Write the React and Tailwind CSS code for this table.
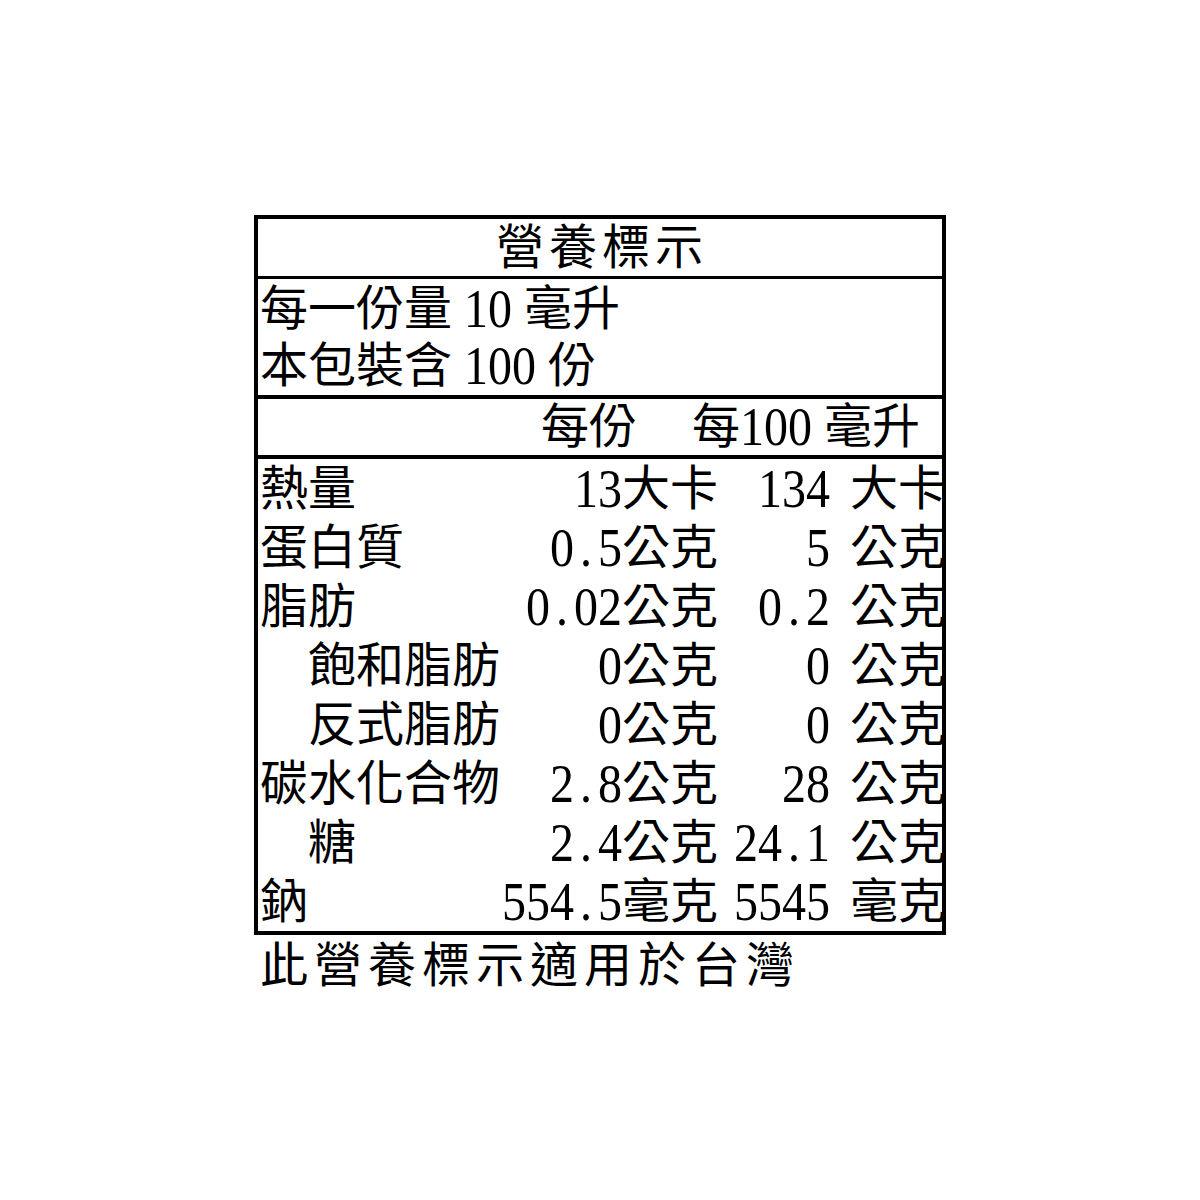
import React from 'react'

const font = { fontFamily: "'Liberation Serif', 'Noto Sans CJK TC', serif" }

const rows = [
  { name: '熱量', a: '13', au: '大卡', b: '134', bu: '大卡' },
  { name: '蛋白質', a: '0.5', au: '公克', b: '5', bu: '公克' },
  { name: '脂肪', a: '0.02', au: '公克', b: '0.2', bu: '公克' },
  { name: '飽和脂肪', indent: true, a: '0', au: '公克', b: '0', bu: '公克' },
  { name: '反式脂肪', indent: true, a: '0', au: '公克', b: '0', bu: '公克' },
  { name: '碳水化合物', a: '2.8', au: '公克', b: '28', bu: '公克' },
  { name: '糖', indent: true, a: '2.4', au: '公克', b: '24.1', bu: '公克' },
  { name: '鈉', a: '554.5', au: '毫克', b: '5545', bu: '毫克' },
]

// half-width digits, tall like the Ming face in the label
const Num = ({ children }) => {
  const parts = String(children).split('.')
  return (
    <span className="inline-block origin-center scale-y-115 leading-none">
      {parts[0]}
      {parts.length > 1 && (
        <>
          <span className="inline-block w-[24px] text-center">.</span>
          {parts[1]}
        </>
      )}
    </span>
  )
}

const App = () => {
  return (
    <div className="min-h-[1200px] w-[1200px] bg-white text-black" style={font}>
      <div className="pl-[254px] pt-[215px]">
        <div className="w-[692px] border-4 border-black text-[48px]">
          {/* title */}
          <div className="flex h-[60px] items-center justify-center border-b-[3px] border-black pl-[4px] leading-none tracking-[5px]">
            營養標示
          </div>

          {/* servings */}
          <div className="flex h-[120px] flex-col justify-center border-b-4 border-black pl-[2px] leading-[57px]">
            <div>每一份量 <Num>10</Num> 毫升</div>
            <div>本包裝含 <Num>100</Num> 份</div>
          </div>

          {/* header */}
          <div className="flex h-[60px] items-center justify-end gap-[55px] border-b-4 border-black pr-[22px] leading-none">
            <span>每份</span>
            <span>每<Num>100</Num> 毫升</span>
          </div>

          {/* data rows */}
          <div className="flex flex-col">
            {rows.map((r) => (
              <div
                key={r.name}
                className="grid h-[59px] grid-cols-[242px_122px_96px_112px_20px_92px] items-center leading-none"
              >
                <span className={r.indent ? 'pl-[50px]' : 'pl-[2px]'}>{r.name}</span>
                <span className="whitespace-nowrap text-right"><Num>{r.a}</Num></span>
                <span className="whitespace-nowrap">{r.au}</span>
                <span className="whitespace-nowrap text-right"><Num>{r.b}</Num></span>
                <span />
                <span className="whitespace-nowrap">{r.bu}</span>
              </div>
            ))}
          </div>
        </div>

        <div className="pl-[6px] text-[48px] leading-[62px] tracking-[6px]">此營養標示適用於台灣</div>
      </div>
    </div>
  )
}

export default App
